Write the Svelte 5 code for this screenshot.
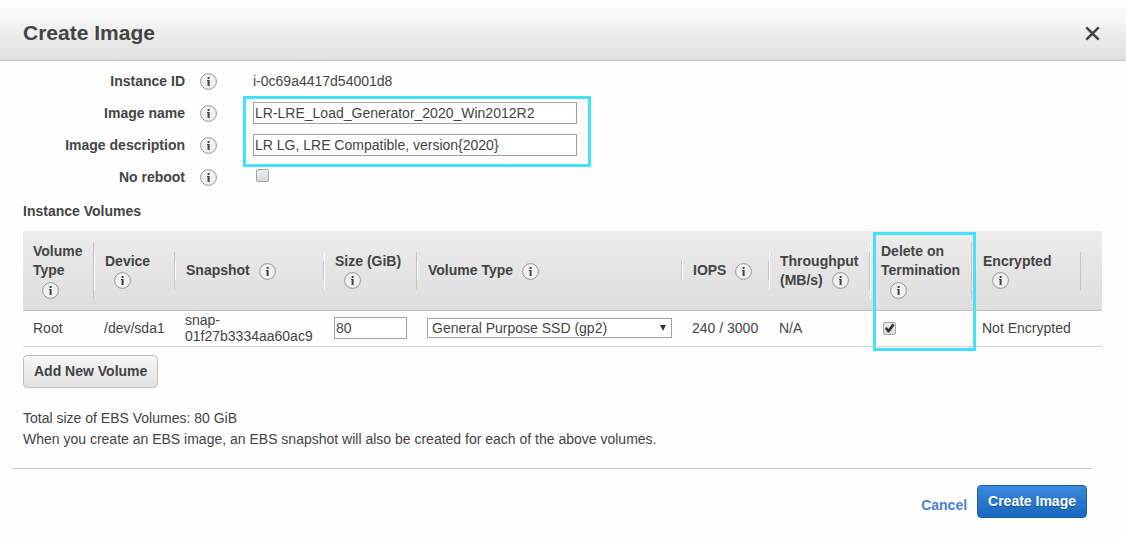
<script>
	let imageName = $state('LR-LRE_Load_Generator_2020_Win2012R2');
	let description = $state('LR LG, LRE Compatible, version{2020}');
	let noReboot = $state(false);

	let volume = $state({
		kind: 'Root',
		device: '/dev/sda1',
		snapshot: 'snap-01f27b3334aa60ac9',
		size: '80',
		type: 'gp2',
		iops: '240 / 3000',
		throughput: 'N/A',
		deleteOnTermination: true,
		encrypted: 'Not Encrypted'
	});

	const columns = [
		{ key: 'kind', label: 'Volume Type' },
		{ key: 'device', label: 'Device' },
		{ key: 'snapshot', label: 'Snapshot' },
		{ key: 'size', label: 'Size (GiB)' },
		{ key: 'type', label: 'Volume Type' },
		{ key: 'iops', label: 'IOPS' },
		{ key: 'throughput', label: 'Throughput (MB/s)' },
		{ key: 'delete', label: 'Delete on Termination', marked: true },
		{ key: 'encrypted', label: 'Encrypted' }
	];
</script>

{#snippet info()}
	<svg class="info" viewBox="0 0 17 17" aria-hidden="true">
		<circle cx="8.5" cy="8.5" r="7.9" fill="#f1f1f1" stroke="#8c8c8c" stroke-width="0.9" />
		<path d="M7.6 4h2v2h-2zM7 7h2.6v6h-2V8H7z" fill="#444" />
	</svg>
{/snippet}

<div class="dialog" role="dialog" aria-labelledby="dialog-title">
	<header class="title-bar">
		<h1 id="dialog-title">Create Image</h1>
		<button class="close" type="button" aria-label="Close">
			<svg viewBox="0 0 14 14" aria-hidden="true">
				<path d="M1.2 1.2l11.6 11.6M12.8 1.2L1.2 12.8" stroke="#444" stroke-width="2.4" />
			</svg>
		</button>
	</header>

	<div class="form">
		<div class="row">
			<span class="label">Instance ID</span>
			{@render info()}
			<span>i-0c69a4417d54001d8</span>
		</div>
		<div class="marked-rows">
			<div class="row">
				<label class="label" for="image-name">Image name</label>
				{@render info()}
				<input id="image-name" class="text" type="text" bind:value={imageName} />
			</div>
			<div class="row">
				<label class="label" for="image-description">Image description</label>
				{@render info()}
				<input id="image-description" class="text" type="text" bind:value={description} />
			</div>
		</div>
		<div class="row">
			<label class="label" for="no-reboot">No reboot</label>
			{@render info()}
			<span class="tick-cell">
				<input id="no-reboot" class="tick" type="checkbox" bind:checked={noReboot} />
			</span>
		</div>
	</div>

	<section class="volumes">
		<h2>Instance Volumes</h2>
		<table>
			<colgroup>
				{#each columns as col (col.key)}
					<col class="col-{col.key}" />
				{/each}
			</colgroup>
			<thead>
				<tr>
					{#each columns as col (col.key)}
						<th class:marked={col.marked} scope="col">
							<div class="head">{col.label}{@render info()}</div>
						</th>
					{/each}
				</tr>
			</thead>
			<tbody>
				<tr>
					<td>{volume.kind}</td>
					<td>{volume.device}</td>
					<td>{volume.snapshot}</td>
					<td><input class="text" type="text" aria-label="Size (GiB)" bind:value={volume.size} /></td>
					<td>
						<div class="select">
							<select aria-label="Volume Type" bind:value={volume.type}>
								<option value="gp2">General Purpose SSD (gp2)</option>
								<option value="io1">Provisioned IOPS SSD (io1)</option>
								<option value="standard">Magnetic</option>
							</select>
							<svg viewBox="0 0 8 8" aria-hidden="true"><path d="M1 1h6L4 7z" fill="#333" /></svg>
						</div>
					</td>
					<td>{volume.iops}</td>
					<td>{volume.throughput}</td>
					<td class="tick-column">
						<input
							class="tick"
							type="checkbox"
							aria-label="Delete on Termination"
							bind:checked={volume.deleteOnTermination}
						/>
					</td>
					<td>{volume.encrypted}</td>
				</tr>
			</tbody>
		</table>
		<button class="btn" type="button">Add New Volume</button>
		<div class="notes">
			<p>Total size of EBS Volumes: {volume.size} GiB</p>
			<p>When you create an EBS image, an EBS snapshot will also be created for each of the above volumes.</p>
		</div>
	</section>

	<footer>
		<a class="cancel" href="#cancel">Cancel</a>
		<button class="btn primary" type="button">Create Image</button>
	</footer>
</div>

<style>
	:global(body) {
		background: #fefefe;
	}

	.dialog {
		font-family: 'Liberation Sans', Arial, sans-serif;
		font-size: 14px;
		line-height: 21px;
		color: #444;
	}

	input,
	select,
	button {
		box-sizing: border-box;
		margin: 0;
		font: inherit;
		color: inherit;
	}

	.title-bar {
		display: flex;
		align-items: center;
		justify-content: space-between;
		box-sizing: border-box;
		height: 61px;
		padding: 6px 26px 0 23px;
		border-bottom: 1px solid #c4c4c4;
		background: linear-gradient(#fff, #dfdfdf);
	}

	h1 {
		margin: 0;
		font-size: 21px;
		line-height: 24px;
	}

	.close {
		display: flex;
		padding: 0;
		border: 0;
		background: none;
		cursor: pointer;
	}

	.close svg {
		width: 15px;
		height: 15px;
	}

	.info {
		flex: none;
		width: 17px;
		height: 17px;
	}

	.form {
		padding-top: 4px;
	}

	.row {
		display: grid;
		grid-template-columns: 185px 17px 324px;
		column-gap: 15px;
		align-items: center;
		height: 32px;
	}

	.row > :last-child {
		margin-left: 21px;
	}

	.label {
		font-weight: bold;
		text-align: right;
	}

	.text {
		display: block;
		width: 100%;
		height: 22px;
		padding: 0 1px;
		border: 1px solid #a0a0a0;
		border-radius: 0;
		background: #fff;
	}

	.marked-rows {
		position: relative;
	}

	/* callout frames lie over the fields and take no clicks */
	.marked-rows::after,
	.marked::after {
		content: '';
		position: absolute;
		box-sizing: border-box;
		border: 3px solid #42e1fd;
		pointer-events: none;
	}

	.marked-rows::after {
		top: -1px;
		left: 243px;
		width: 348px;
		height: 71px;
	}

	.tick-cell {
		display: flex;
		padding: 0 0 4px 3px;
	}

	.tick {
		display: block;
		appearance: none;
		width: 13px;
		height: 13px;
		border: 1px solid #a6a6a6;
		border-radius: 2px;
		background: linear-gradient(#ececec, #dadada);
	}

	.tick:checked::before {
		content: '';
		display: block;
		width: 11px;
		height: 11px;
		background: #333;
		clip-path: polygon(8% 54%, 24% 42%, 40% 58%, 78% 10%, 96% 24%, 48% 90%, 34% 90%);
	}

	.volumes {
		padding: 8px 24px 0 23px;
	}

	h2 {
		margin: 0 0 9px;
		font-size: 14px;
		line-height: 21px;
	}

	table {
		width: 100%;
		table-layout: fixed;
		border-collapse: separate;
		border-spacing: 0;
	}

	.col-kind {
		width: 71px;
	}

	.col-device {
		width: 81px;
	}

	.col-snapshot {
		width: 149px;
	}

	.col-size {
		width: 93px;
	}

	.col-iops {
		width: 87px;
	}

	.col-throughput {
		width: 101px;
	}

	.col-delete {
		width: 102px;
	}

	.col-encrypted {
		width: 130px;
	}

	thead tr {
		background: linear-gradient(#ececec, #dddddd);
	}

	th {
		position: relative;
		height: 79px;
		padding: 0;
		border-bottom: 1px solid #c4c4c4;
		text-align: left;
	}

	.head {
		padding: 0 8px 0 10px;
		border-right: 1px solid #c4c4c4;
		border-left: 1px solid #fff;
		line-height: 19px;
	}

	.head .info {
		margin-left: 9px;
		vertical-align: middle;
	}

	th:first-child .head {
		border-left: 0;
	}

	th:last-child .head {
		margin-right: 21px;
	}

	.marked::after {
		top: 1px;
		left: 3px;
		width: 103px;
		height: 119px;
	}

	td {
		height: 32px;
		padding: 1px 10px 2px;
		border-bottom: 1px solid #d5d5d5;
		line-height: 16px;
	}

	.tick-column {
		padding-left: 13px;
	}

	.select {
		position: relative;
	}

	select {
		display: block;
		appearance: none;
		width: 100%;
		height: 20px;
		padding: 0 20px 0 4px;
		border: 1px solid #a0a0a0;
		border-radius: 0;
		background: #fff;
		line-height: 18px;
	}

	.select svg {
		position: absolute;
		top: 6px;
		right: 5px;
		width: 8px;
		height: 8px;
		pointer-events: none;
	}

	.btn {
		height: 33px;
		padding: 0 10px;
		border: 1px solid #c0c0c0;
		border-radius: 4px;
		background: linear-gradient(#f6f6f6, #e2e2e2);
		font-weight: bold;
		cursor: pointer;
	}

	.volumes .btn {
		display: block;
		margin-top: 8px;
	}

	.notes {
		padding: 20px 0 18px;
	}

	.notes p {
		margin: 0;
	}

	footer {
		display: flex;
		align-items: center;
		justify-content: flex-end;
		gap: 10px;
		margin: 0 34px 0 13px;
		padding: 16px 5px 20px;
		border-top: 1px solid #c8c8c8;
	}

	.cancel {
		padding-top: 8px;
		color: #4a7fd6;
		font-weight: bold;
		text-decoration: none;
	}

	.primary {
		border-color: #1b5dab;
		background: linear-gradient(#3b8ade, #1765bd);
		color: #fff;
		text-shadow: 0 1px 1px #1a4f8c;
	}
</style>
